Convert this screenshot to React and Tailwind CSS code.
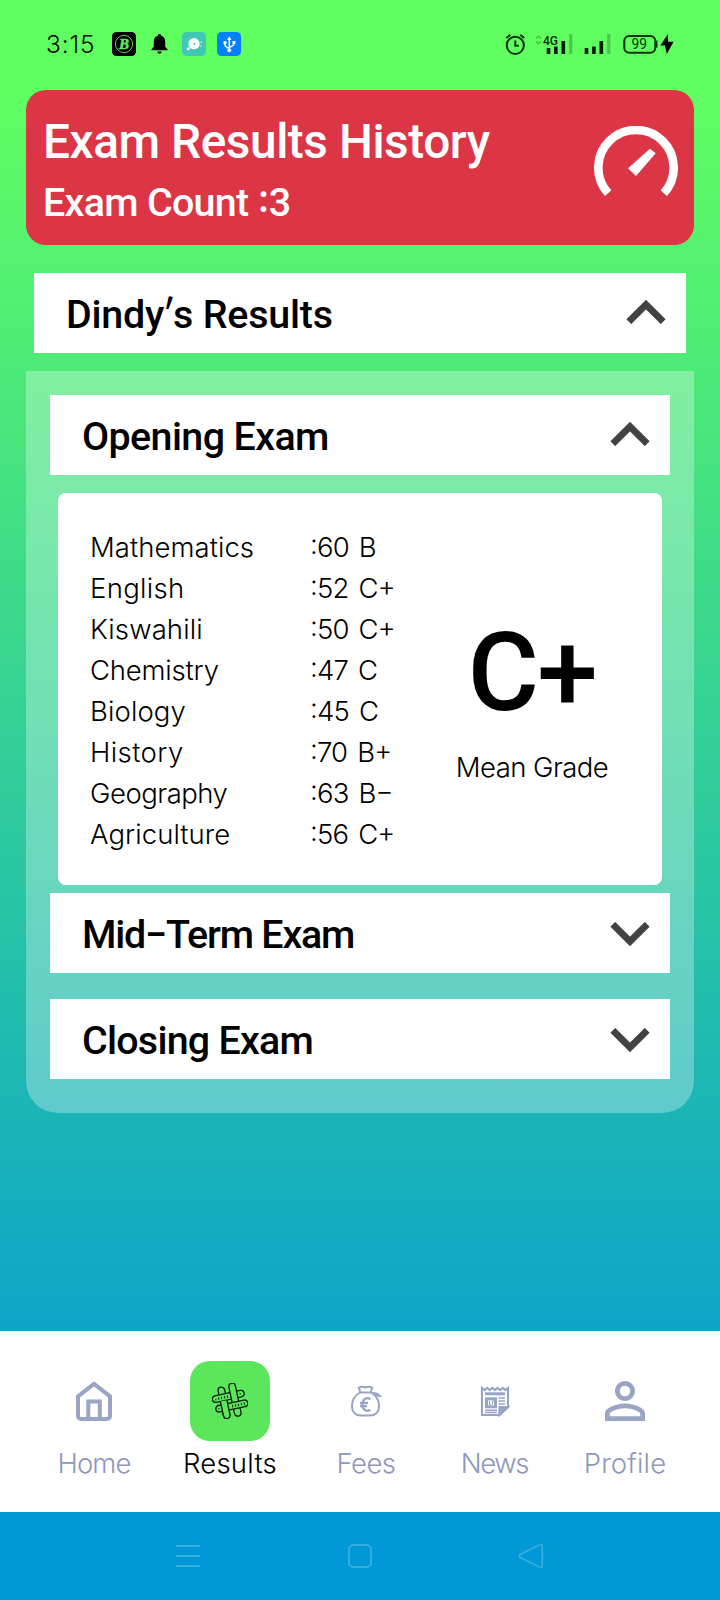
import React from "react";

const subjects = [
  ["Mathematics", ":60 B", "tracking-[0.05px]"],
  ["English", ":52 C+", "tracking-[0.3px]"],
  ["Kiswahili", ":50 C+", "tracking-[0.1px]"],
  ["Chemistry", ":47 C", "tracking-[-0.2px]"],
  ["Biology", ":45 C", "tracking-[0.1px]"],
  ["History", ":70 B+", "tracking-[0.4px]"],
  ["Geography", ":63 B−", "tracking-[-0.5px]"],
  ["Agriculture", ":56 C+", "tracking-[0.05px]"],
];

function Chevron({ open }) {
  return (
    <svg
      className={open ? "mb-[2px] h-6 w-10" : "mt-[2px] h-6 w-10"}
      viewBox="0 0 40 24"
      fill="none"
      stroke="#424242"
      strokeWidth="6.8"
    >
      <path d={open ? "M2.8 21.7 20 4.6 37.2 21.7" : "M2.8 2.3 20 19.4 37.2 2.3"} />
    </svg>
  );
}

function AccordionBar({ children, open, className = "" }) {
  return (
    <div className={`flex h-20 items-center justify-between bg-white pr-5 pl-8 ${className}`}>
      <div className="pt-1 text-[39.4px] leading-[60px] font-medium whitespace-nowrap">{children}</div>
      <Chevron open={open} />
    </div>
  );
}

function StatusBar() {
  return (
    <header className="flex h-[90px] items-start justify-between pr-[45px] pl-[46px]">
      <div className="flex items-center pt-8">
        <span className="w-[66px] font-['Inter',sans-serif] text-[24.5px] leading-6 font-light tracking-[0.9px]">3:15</span>
        <svg className="h-6 w-6" viewBox="0 0 24 24">
          <rect width="24" height="24" rx="4.5" fill="#000" />
          <circle cx="12" cy="12" r="8.6" fill="none" stroke="#5cc45c" strokeWidth="1" />
          <text x="12" y="17" textAnchor="middle" fontFamily="Liberation Serif" fontSize="15" fontWeight="700" fontStyle="italic" fill="#62e862" stroke="#62e862" strokeWidth=".5">B</text>
        </svg>
        <svg className="ml-[15px] h-6 w-[17px]" viewBox="0 0 17 24">
          <path d="M8.5 2c1 0 1.7.7 1.7 1.7 2.8.8 4 3 4 5.8v5.3l2.3 2.5v.9H.5v-.9l2.3-2.5V9.5c0-2.8 1.2-5 4-5.8C6.8 2.700 7.500 2 8.500 2ZM6.300 19.600h4.400c0 1.300-1 2.200-2.200 2.200s-2.200-.9-2.200-2.200Z" />
        </svg>
        <svg className="ml-[14px] h-6 w-6" viewBox="0 0 24 24">
          <rect width="24" height="24" rx="4.5" fill="#41c8b4" />
          <circle cx="12" cy="11.7" r="5.6" fill="#fff" />
          <circle cx="12.3" cy="11.7" r="1" fill="#41c8b4" />
          <circle cx="6.3" cy="16.7" r="1.5" fill="#fff" />
          <path d="M18.5 10.3h1.5M17.8 14h1.5" stroke="#fff" strokeWidth="1" />
        </svg>
        <svg className="ml-[11px] h-6 w-6" viewBox="0 0 24 24">
          <rect width="24" height="24" rx="4.5" fill="#0580fb" />
          <path d="M12.3 7v11M12.3 16.3c-2.5-.8-4.3-1.8-4.3-3.8v-1.500M12.300 15.300c2.500-.8 4.600-1.800 4.600-3.800V10" fill="none" stroke="#fff" strokeWidth="1.5" />
          <path d="m12.3 4.3 2.200 3.600h-4.400ZM15.400 9h3v3h-3Z" fill="#fff" />
          <circle cx="8" cy="10.8" r="1.7" fill="#fff" />
          <circle cx="12.3" cy="18.3" r="1.9" fill="#fff" />
        </svg>
      </div>
      <svg className="mt-8 h-6 w-[170px]" viewBox="0 0 170 24">
        <g fill="none" stroke="#06330a" strokeWidth="2">
          <circle cx="10.3" cy="13.3" r="8.6" />
          <path d="M10.3 8.5v5.3h3.5M1.3 6l4-3.3M19.3 6l-4-3.3" />
        </g>
        <path d="m31 6.5 2.5-2.3L36 6.5M31 9.5l2.5 2.3L36 9.5" fill="none" stroke="#000" strokeOpacity=".25" strokeWidth="1.5" />
        <text x="38" y="12.7" fontFamily="Roboto" fontSize="13.5" fontWeight="500" textLength="15" lengthAdjust="spacingAndGlyphs" fill="#032806">4G</text>
        <path d="M58.3 22V9M50.8 22v-7.5M43.5 22v-6M96.3 22V9M88.9 22v-7.5M81.5 22v-6" stroke="#021c04" strokeWidth="3.6" />
        <path d="M65.7 22V2M103.8 22V2" stroke="#000" strokeOpacity=".22" strokeWidth="3.3" />
        <rect x="119.3" y="4" width="31" height="16.8" rx="5" fill="none" stroke="#06330a" strokeWidth="2" />
        <path d="M151.5 8.500v7" stroke="#06330a" strokeWidth="2" />
        <text x="134.3" y="17" textAnchor="middle" fontFamily="Roboto" fontSize="13.8" fill="#06330a">99</text>
        <path d="m163 2-7.7 11.5h4.6L161.8 22l6.7-12.3h-5.4Z" fill="#000" />
      </svg>
    </header>
  );
}

function HomeIcon() {
  return (
    <svg className="h-10 w-10" viewBox="0 0 40 40" fill="none" stroke="#9aa5c5" strokeWidth="4">
      <path d="M4 15.3 20 2.8l16 12.500V35a3 3 0 0 1-3 3H7A3 3 0 0 1 4 35ZM14.300 38V20.500h11.500V38" />
    </svg>
  );
}

function ResultsIcon() {
  return (
    <svg className="h-9 w-9" viewBox="-18 -18 36 36" fill="#5ce65c" stroke="#06200a" strokeWidth="1.3">
      <g transform="rotate(-12)">
        <rect x="-9.5" y="-15.5" width="6.6" height="31" rx="3.3" />
        <rect x="-17" y="-8.2" width="32.5" height="6.6" rx="3.3" />
        <rect x="1.8" y="-17" width="6.6" height="33.5" rx="3.3" />
        <rect x="-15.5" y="2" width="32.5" height="6.6" rx="3.3" />
        <path d="M-9.5 -1.5V13.3a3.3 3.3 0 0 0 6.6 0V-1.5" />
        <path d="M-13.5-5v1.5M-10.5-6v2.5M-7.5-6v2.5M-4.5-6v2.5M-1.5-6v2.5M1.5 4.3v2.5M4.5 4.3v2.5M7.5 4.3v2.5M10.5 4.3v2.5M13.5 4.3v2.5M11.5-5.5v1.5M-12.5 4.5v1.5" strokeWidth="1" />
      </g>
    </svg>
  );
}

function FeesIcon() {
  return (
    <svg className="h-8 w-8" viewBox="0 0 32 32" fill="none" stroke="#9aa5c5" strokeWidth="2">
      <path d="M10 7.5C5.5 10 2 15 2 21c0 6.5 4 9.5 9 9.5h9c5 0 9-3 9-9.5C29 15 25.5 10 21 7.5ZM10.5 7.5 8.8 2.8c2-1.3 4-1.3 6.7-.3 2.7-1 4.7-1 6.7.3L20.5 7.5" />
      <path d="M21.5 7.7c3 0 6 .8 8.3 3.2-2.3 0-4.3-.4-6-1.600" />
      <path d="M20.3 14.2c-4-2.700-8 .3-8 5.300s4 8 8 5.300M10 18h8M10 21.200h7" strokeWidth="2.3" />
    </svg>
  );
}

function NewsIcon() {
  return (
    <svg className="h-8 w-[30px]" viewBox="0 0 30 32" fill="none" stroke="#9aa5c5" strokeWidth="2.2">
      <path d="M2 3v27h17.5l8.5-8V3l-2.5 2-2.7-2-2.6 2-2.6-2L15 5l-2.6-2-2.6 2-2.6-2-2.6 2Z" />
      <path d="M19.5 30v-8h8.5Z" fill="#9aa5c5" />
      <path d="M5 8.8h20" strokeWidth="3" />
      <rect x="6.5" y="13.8" width="9" height="8" strokeWidth="3" />
      <path d="M9.5 15.5v4h1.5M12.5 15.5v4M12.5 16h2" strokeWidth="1.1" />
      <path d="M18.5 13H25M18.5 16H25M18.5 19H25M5 25.3h12M5 27.5h12" strokeWidth="1.4" />
    </svg>
  );
}

function ProfileIcon() {
  return (
    <svg className="h-10 w-10" viewBox="4 4 16 16" fill="#9aa5c5">
      <path d="M12 5.9a2.1 2.1 0 1 1 0 4.2 2.1 2.1 0 0 1 0-4.2m0 9c2.97 0 6.1 1.46 6.1 2.1v1.1H5.9V17c0-.64 3.13-2.1 6.1-2.1M12 4C9.79 4 8 5.79 8 8s1.79 4 4 4 4-1.79 4-4-1.79-4-4-4m0 9c-2.67 0-8 1.34-8 4v3h16v-3c0-2.66-5.33-4-8-4" />
    </svg>
  );
}

const tabs = [
  ["Home", <HomeIcon />, "tracking-[-0.9px]"],
  ["Results", <ResultsIcon />, "tracking-[0.2px]"],
  ["Fees", <FeesIcon />, "tracking-[-0.6px]"],
  ["News", <NewsIcon />, "tracking-[-1.4px]"],
  ["Profile", <ProfileIcon />, "tracking-[0.2px]"],
];

export default function App() {
  return (
    <div className="flex h-[1600px] w-[720px] flex-col bg-[linear-gradient(to_bottom,#60ff60_80px,#0098d8_1512px)] font-['Roboto',sans-serif] text-black">
      <StatusBar />

      <section className="mx-[26px] flex h-[155px] justify-between rounded-[20px] bg-[#dc3546] pt-[21px] pl-[17px] text-white">
        <div className="font-medium whitespace-nowrap">
          <h1 className="text-[47.8px] leading-[62px] tracking-[-0.45px]">Exam Results History</h1>
          <p className="text-[39.4px] leading-[60px] tracking-[-0.7px]">
            Exam Count <span className="font-['Inter',sans-serif] leading-none [font-feature-settings:'case']">:</span>3
          </p>
        </div>
        <svg className="mt-[15px] mr-4 h-[70px] w-[84px]" viewBox="0 0 84 70">
          <path d="M14.2 67.2A37.7 37.7 0 1 1 69.8 67.2" fill="none" stroke="#fff" strokeWidth="8.6" />
          <path d="m34 42.3 8 7.7 19.7-22.7-5.7-4.6Z" fill="#fff" />
        </svg>
      </section>

      <AccordionBar open className="mx-[34px] mt-7">
        <span className="tracking-[-0.2px]">
          Dindy<span className="-mr-[2px] -ml-[2px] font-['Lato',sans-serif] leading-none">′</span>s Results
        </span>
      </AccordionBar>

      <section className="mx-[26px] mt-[18px] h-[742px] rounded-b-[32px] bg-white/30 px-6 pt-6">
        <AccordionBar open>
          <span className="tracking-[-0.6px]">Opening Exam</span>
        </AccordionBar>

        <div className="mx-2 mt-[18px] flex h-[392px] rounded-lg bg-white pt-[34px] pl-8 font-['Inter',sans-serif] text-[27.5px] leading-[41px] font-light">
          <ul className="w-[362px]">
            {subjects.map(([name, score, tracking]) => (
              <li key={name} className="flex">
                <span className={`w-[220px] ${tracking}`}>{name}</span>
                <span className="tracking-[-0.8px] [word-spacing:3px] [font-feature-settings:'case']">{score}</span>
              </li>
            ))}
          </ul>
          <div className="flex w-[160px] flex-col items-center pt-[86px]">
            <div className="font-['Roboto',sans-serif] text-[109px] leading-[120px] font-medium tracking-[-1.5px]">C+</div>
            <div className="mt-[14px] tracking-[-0.55px] whitespace-nowrap">Mean Grade</div>
          </div>
        </div>

        <AccordionBar className="mt-2">
          <span className="tracking-[-1.2px]">Mid−Term Exam</span>
        </AccordionBar>
        <AccordionBar className="mt-[26px]">
          <span className="tracking-[-0.75px]">Closing Exam</span>
        </AccordionBar>
      </section>

      <nav className="mt-auto grid h-[181px] grid-cols-[136px_136px_136px_121px_140px] bg-white pt-[30px] pl-[26px]">
        {tabs.map(([label, icon, tracking]) => (
          <div key={label} className="flex flex-col items-center">
            <div className={`flex h-20 w-20 items-center justify-center rounded-[20px] ${label === "Results" ? "bg-[#5ce65c]" : ""}`}>
              {icon}
            </div>
            <span
              className={`mt-[2px] font-['Inter',sans-serif] text-[27.5px] leading-10 font-light ${tracking} ${label === "Results" ? "text-black" : "text-[#8d98bc]"}`}
            >
              {label}
            </span>
          </div>
        ))}
      </nav>

      <footer className="flex h-[88px] items-center justify-between bg-[#0098d6] pr-[176px] pl-[176px]">
        <svg className="h-[26px] w-6" viewBox="0 0 24 26" stroke="#3badde" strokeWidth="2">
          <path d="M0 3h24M0 13h24M0 23h24" />
        </svg>
        <svg className="ml-[2px] h-[26px] w-6" viewBox="0 0 24 26" fill="none" stroke="#3badde" strokeWidth="1.8">
          <rect x="1" y="2" width="22" height="22" rx="4.5" />
        </svg>
        <svg className="h-[26px] w-[26px]" viewBox="0 0 26 26" fill="none" stroke="#3badde" strokeWidth="1.8">
          <path d="M22.3 1.5 2 11.5q-1.5 1.3 0 2.8l20.3 10.2q2 .5 2-1.5V3q0-2-2-1.5Z" />
        </svg>
      </footer>
    </div>
  );
}
